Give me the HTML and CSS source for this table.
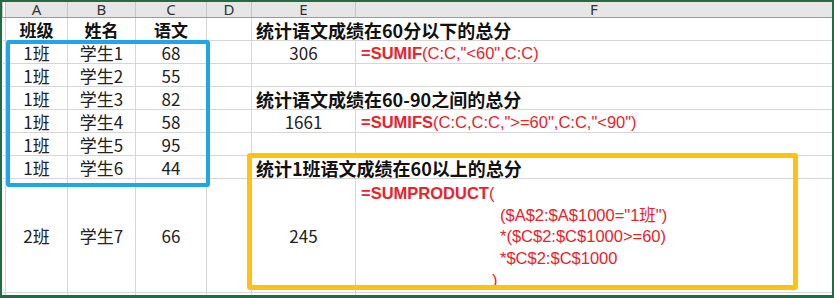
FILE: index.html
```html
<!DOCTYPE html>
<html lang="zh-CN">
<head>
    <meta charset="UTF-8">
    <title>SUMIF 示例</title>
<link rel="stylesheet" href="styles.css">
</head>
<body>
<div class="sheet">
    <table class="grid">
        <colgroup>
            <col class="c-row"><col class="c-a"><col class="c-b"><col class="c-c"><col class="c-d"><col class="c-e"><col class="c-f">
        </colgroup>
        <tr class="head">
            <td></td><td>A</td><td>B</td><td>C</td><td>D</td><td>E</td><td>F</td>
        </tr>
        <tr>
            <td class="rh"></td><td class="b">班级</td><td class="b">姓名</td><td class="b">语文</td><td></td>
            <td class="title" colspan="2">统计语文成绩在60分以下的总分</td>
        </tr>
        <tr>
            <td class="rh"></td><td>1班</td><td>学生1</td><td>68</td><td></td><td>306</td>
            <td class="fx"><b>=SUMIF</b>(C:C,"&lt;60",C:C)</td>
        </tr>
        <tr>
            <td class="rh"></td><td>1班</td><td>学生2</td><td>55</td><td></td><td></td><td></td>
        </tr>
        <tr>
            <td class="rh"></td><td>1班</td><td>学生3</td><td>82</td><td></td>
            <td class="title" colspan="2">统计语文成绩在60-90之间的总分</td>
        </tr>
        <tr>
            <td class="rh"></td><td>1班</td><td>学生4</td><td>58</td><td></td><td>1661</td>
            <td class="fx"><b>=SUMIFS</b>(C:C,C:C,"&gt;=60",C:C,"&lt;90")</td>
        </tr>
        <tr>
            <td class="rh"></td><td>1班</td><td>学生5</td><td>95</td><td></td><td></td><td></td>
        </tr>
        <tr>
            <td class="rh"></td><td>1班</td><td>学生6</td><td>44</td><td></td>
            <td class="title" colspan="2">统计1班语文成绩在60以上的总分</td>
        </tr>
        <tr class="tall">
            <td class="rh"></td><td>2班</td><td>学生7</td><td>66</td><td></td><td>245</td>
            <td class="fx multi">
                <div><b>=SUMPRODUCT</b>(</div>
                <div class="ind">($A$2:$A$1000="1班")</div>
                <div class="ind">*($C$2:$C$1000&gt;=60)</div>
                <div class="ind">*$C$2:$C$1000</div>
                <div class="close">)</div>
            </td>
        </tr>
        <tr>
            <td class="rh"></td><td>2班</td><td>学生8</td><td>73</td><td></td><td></td><td></td>
        </tr>
    </table>
    <!-- 标注框 -->
    <div class="mark mark-blue"></div>
    <div class="mark mark-gold"></div>
</div>
</body>
</html>
```

FILE: styles.css
```css
body{
    margin: 0;
    background-color: #ffffff;
}
.sheet{
    position: relative;
    width: 834px;
    height: 298px;
    box-sizing: border-box;
    border: 2px solid #1f6e43;
    border-bottom-width: 3px;
    overflow: hidden;
    background-color: #ffffff;
    font-family: "Noto Sans CJK SC", "Noto Sans", sans-serif;
    color: #222222;
}
.grid{
    border-collapse: collapse;
    table-layout: fixed;
    width: 830px;
}
.c-row{ width: 3px; }
.c-a{ width: 62px; }
.c-b{ width: 68px; }
.c-c{ width: 71px; }
.c-d{ width: 45px; }
.c-e{ width: 104px; }
.c-f{ width: 477px; }

.grid td{
    height: 20px;
    padding: 2px 0 0 0;
    border: 1px solid #d6d6d6;
    border-top: none;
    text-align: center;
    vertical-align: middle;
    font-size: 17px;
    line-height: 20px;
    white-space: nowrap;
    overflow: visible;
}
.grid tr.head td{
    height: 15px;
    padding: 0;
    line-height: 15px;
    background-color: #e6e6e6;
    border-color: #c6c6c6;
    border-bottom: 1px solid #9a9a9a;
    font-family: "Noto Sans", sans-serif;
    font-size: 15px;
    color: #333333;
}
.grid tr.head td:first-child{
    background-color: #ffffff;
}
.grid td.rh{
    border-left: none;
}
.grid td.b{
    font-weight: bold;
    color: #111111;
}
.grid td.title{
    text-align: left;
    padding-left: 4px;
    font-weight: bold;
    font-size: 18px;
    color: #111111;
}
.grid td.fx{
    text-align: left;
    padding-left: 5px;
    font-family: "Liberation Sans", "Noto Sans CJK SC", sans-serif;
    font-size: 16.5px;
    color: #e8232b;
}
.grid td.fx b{
    font-weight: bold;
}
.grid tr.tall td{
    height: 107px;
}
.grid tr.tall td.multi{
    height: 105px;
    vertical-align: top;
    padding-top: 4px;
    line-height: 21.7px;
}
.ind{
    padding-left: 139px;
}
.close{
    padding-left: 131px;
}

.mark{
    position: absolute;
    box-sizing: border-box;
    border-radius: 3px;
}
.mark-blue{
    left: 4px;
    top: 38px;
    width: 204px;
    height: 147px;
    border: 4px solid #1ea5ea;
}
.mark-gold{
    left: 245px;
    top: 151px;
    width: 551px;
    height: 137px;
    border: 5px solid #ffc20e;
}
```
